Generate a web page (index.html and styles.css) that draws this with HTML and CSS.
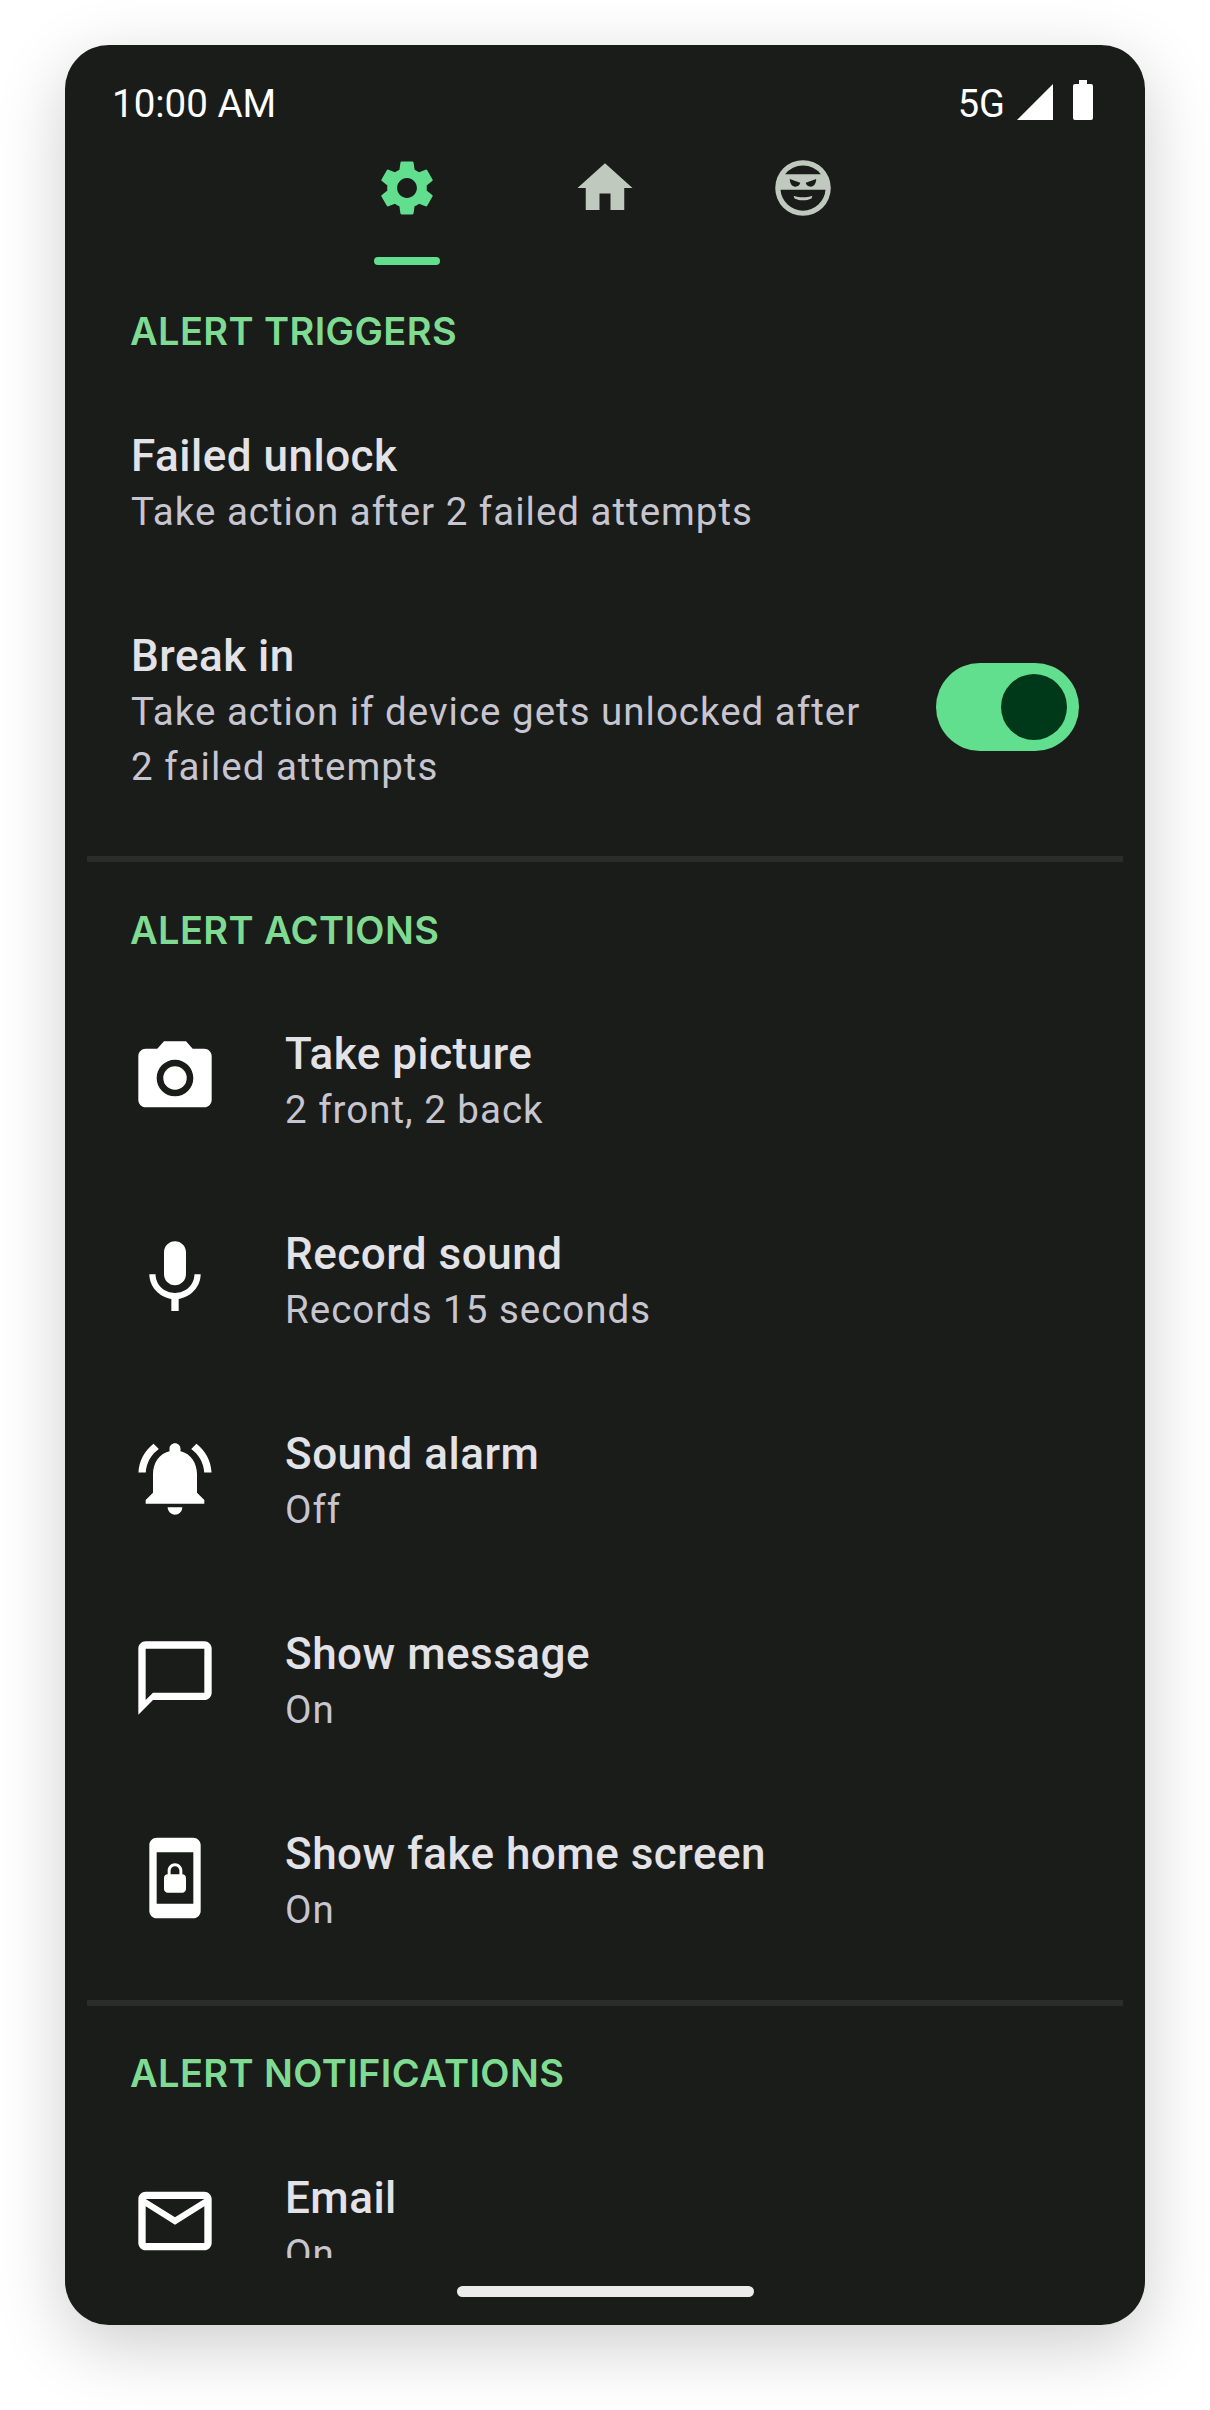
FILE: index.html
```html
<!DOCTYPE html>
<html lang="en">
<head>
  <meta charset="UTF-8">
  <title>Alert settings</title>
  <meta name="viewport" content="width=device-width, initial-scale=1.0">
  <link rel="stylesheet" href="styles.css">
</head>
<body>

  <div class="phone">
    <div class="status-bar">
      <span class="clock">10:00 AM</span>
      <div class="status-right">
        <span class="network">5G</span>
        <svg class="signal" viewBox="0 0 36 36"><path d="M36 0v36H0z"/></svg>
        <svg class="battery" viewBox="0 0 20 40"><path d="M6 0h8v4h4a2 2 0 0 1 2 2v32a2 2 0 0 1-2 2H2a2 2 0 0 1-2-2V6a2 2 0 0 1 2-2h4z"/></svg>
      </div>
    </div>

    <div class="tabs">
      <div class="tab active">
        <svg class="tab-icon" viewBox="0 0 24 24"><path d="M19.14 12.94c.04-.3.06-.61.06-.94 0-.32-.02-.64-.07-.94l2.03-1.58c.18-.14.23-.41.12-.61l-1.92-3.32c-.12-.22-.37-.29-.59-.22l-2.39.96c-.5-.38-1.03-.7-1.62-.94l-.36-2.54c-.04-.24-.24-.41-.48-.41h-3.84c-.24 0-.43.17-.47.41l-.36 2.54c-.59.24-1.13.57-1.62.94l-2.39-.96c-.22-.08-.47 0-.59.22L2.74 8.87c-.12.21-.08.47.12.61l2.03 1.58c-.05.3-.09.63-.09.94s.02.64.07.94l-2.03 1.58c-.18.14-.23.41-.12.61l1.92 3.32c.12.22.37.29.59.22l2.39-.96c.5.38 1.03.7 1.62.94l.36 2.54c.05.24.24.41.48.41h3.84c.24 0 .44-.17.47-.41l.36-2.54c.59-.24 1.13-.56 1.62-.94l2.39.96c.22.08.47 0 .59-.22l1.92-3.32c.12-.22.07-.47-.12-.61l-2.01-1.58zM12 15.6c-1.98 0-3.6-1.62-3.6-3.6s1.62-3.6 3.6-3.6 3.6 1.62 3.6 3.6-1.62 3.6-3.6 3.6z"/></svg>
      </div>
      <div class="tab">
        <svg class="tab-icon" viewBox="0 0 24 24"><path d="M10 20v-6h4v6h5v-8h3L12 3 2 12h3v8z"/></svg>
      </div>
      <div class="tab">
        <svg class="tab-icon" viewBox="0 0 24 24">
          <path fill-rule="evenodd" d="M12 1.900a10.100 10.100 0 1 1 0 20.200 10.100 10.100 0 0 1 0-20.200zM5.500 7A8.200 8.200 0 0 1 18.500 7zM3.820 12.600A8.200 8.200 0 0 0 20.180 12.600zM7.200 8.700 11 10.100c-.1.8-.8 1.400-1.800 1.400-1.200 0-2-1.200-2-2.800zM16.800 8.700 13 10.100c.1.8.8 1.400 1.800 1.400 1.200 0 2-1.200 2-2.800z"/>
          <path d="M8.600 14.800c2.200.8 4.600.8 6.800 0l-.3 1c-2 .9-4.200.9-6.200 0z"/>
        </svg>
      </div>
    </div>

    <div class="content">
      <div class="section-label first">ALERT TRIGGERS</div>

      <div class="row">
        <div class="row-text">
          <div class="row-title">Failed unlock</div>
          <div class="row-sub">Take action after 2 failed attempts</div>
        </div>
      </div>

      <div class="row">
        <div class="row-text">
          <div class="row-title">Break in</div>
          <div class="row-sub">Take action if device gets unlocked after<br>2 failed attempts</div>
        </div>
        <div class="toggle"><div class="knob"></div></div>
      </div>

      <div class="divider"></div>

      <div class="section-label">ALERT ACTIONS</div>

      <div class="row">
        <svg class="row-icon" viewBox="0 0 24 24"><path fill-rule="evenodd" d="M9 2 7.170 4H4c-1.100 0-2 .9-2 2v12c0 1.100.9 2 2 2h16c1.100 0 2-.9 2-2V6c0-1.100-.9-2-2-2h-3.170L15 2H9zm3 15c-2.760 0-5-2.240-5-5s2.240-5 5-5 5 2.240 5 5-2.240 5-5 5z"/><circle cx="12" cy="12" r="3.200"/></svg>
        <div class="row-text">
          <div class="row-title">Take picture</div>
          <div class="row-sub">2 front, 2 back</div>
        </div>
      </div>

      <div class="row">
        <svg class="row-icon" viewBox="0 0 24 24"><path d="M12 14c1.660 0 2.990-1.340 2.990-3L15 5c0-1.660-1.340-3-3-3S9 3.340 9 5v6c0 1.660 1.340 3 3 3zm5.300-3c0 3-2.540 5.100-5.300 5.100S6.700 14 6.700 11H5c0 3.410 2.720 6.230 6 6.720V21h2v-3.280c3.280-.48 6-3.300 6-6.720h-1.700z"/></svg>
        <div class="row-text">
          <div class="row-title">Record sound</div>
          <div class="row-sub">Records 15 seconds</div>
        </div>
      </div>

      <div class="row">
        <svg class="row-icon" viewBox="0 0 24 24"><path d="M7.580 4.080 6.150 2.650C3.750 4.480 2.170 7.300 2.030 10.500h2c.15-2.650 1.510-4.970 3.550-6.420zm12.390 6.420h2c-.15-3.200-1.730-6.020-4.120-7.850l-1.420 1.430c2.020 1.450 3.390 3.770 3.540 6.420zM18 11c0-3.070-1.640-5.640-4.500-6.320V4c0-.83-.67-1.500-1.500-1.500s-1.500.67-1.500 1.500v.68C7.630 5.360 6 7.920 6 11v5l-2 2v1h16v-1l-2-2v-5zm-6 11c.14 0 .27-.01.4-.04.65-.14 1.180-.58 1.440-1.180.1-.24.15-.5.15-.78h-4c.01 1.100.9 2 2.010 2z"/></svg>
        <div class="row-text">
          <div class="row-title">Sound alarm</div>
          <div class="row-sub">Off</div>
        </div>
      </div>

      <div class="row">
        <svg class="row-icon" viewBox="0 0 24 24"><path d="M20 2H4c-1.100 0-2 .9-2 2v18l4-4h14c1.100 0 2-.9 2-2V4c0-1.100-.9-2-2-2zm0 14H6l-2 2V4h16v12z"/></svg>
        <div class="row-text">
          <div class="row-title">Show message</div>
          <div class="row-sub">On</div>
        </div>
      </div>

      <div class="row">
        <svg class="row-icon" viewBox="0 0 24 24"><path d="M10 16h4c.55 0 1-.45 1-1v-3c0-.55-.45-1-1-1v-1c0-1.110-.9-2-2-2-1.110 0-2 .9-2 2v1c-.55 0-1 .45-1 1v3c0 .55.45 1 1 1zm.8-6c0-.66.54-1.200 1.200-1.200.66 0 1.200.54 1.200 1.200v1h-2.400v-1zM17 1H7c-1.100 0-2 .9-2 2v18c0 1.100.9 2 2 2h10c1.100 0 2-.9 2-2V3c0-1.100-.9-2-2-2zm0 18H7V5h10v14z"/></svg>
        <div class="row-text">
          <div class="row-title">Show fake home screen</div>
          <div class="row-sub">On</div>
        </div>
      </div>

      <div class="divider"></div>

      <div class="section-label">ALERT NOTIFICATIONS</div>

      <div class="row">
        <svg class="row-icon" viewBox="0 0 24 24"><path d="M20 4H4c-1.100 0-1.990.9-1.990 2L2 18c0 1.100.9 2 2 2h16c1.100 0 2-.9 2-2V6c0-1.100-.9-2-2-2zm0 14H4V8l8 5 8-5v10zm-8-7L4 6h16l-8 5z"/></svg>
        <div class="row-text">
          <div class="row-title">Email</div>
          <div class="row-sub">On</div>
        </div>
      </div>
    </div>

    <div class="home-area"><div class="home-bar"></div></div>
  </div>

</body>
</html>
```

FILE: styles.css
```css
body {
  margin: 0;
  padding: 45px 65px 85px;
  background: #fff;
  font-family: Roboto, sans-serif;
}
.phone {
  width: 1080px;
  height: 2280px;
  display: flex;
  flex-direction: column;
  background: #1a1c19;
  border-radius: 44px;
  box-shadow: 0 20px 70px rgba(0, 0, 0, 0.2);
  overflow: hidden;
}

/* status bar */
.status-bar {
  height: 66px;
  padding: 0 52px 0 47px;
  margin-top: 26px;
  display: flex;
  justify-content: space-between;
  align-items: flex-start;
  color: #fff;
}
.clock {
  font-size: 38.5px;
  line-height: 66px;
}
.status-right {
  display: flex;
  align-items: flex-end;
  gap: 12px;
  height: 40px;
  margin-top: 9px;
}
.network {
  font-size: 38px;
  line-height: 32px;
}
.signal {
  width: 36px;
  height: 36px;
  fill: #fff;
}
.battery {
  width: 20px;
  height: 40px;
  fill: #fff;
  margin-left: 8px;
}

/* tabs */
.tabs {
  display: flex;
  justify-content: center;
  gap: 132px;
  padding-top: 18px;
}
.tab {
  width: 66px;
  height: 110px;
  position: relative;
}
.tab-icon {
  display: block;
  width: 66px;
  height: 66px;
  fill: #bfc9bd;
}
.tab.active .tab-icon {
  fill: #62de8f;
}
.tab.active::after {
  content: "";
  position: absolute;
  left: 0;
  bottom: 0;
  width: 66px;
  height: 8px;
  background: #62de8f;
  border-radius: 4px;
}

/* list */
.content {
  flex: 1;
  overflow: hidden;
  height: 0;
}
.section-label {
  font-family: Inter, sans-serif;
  font-weight: 600;
  font-size: 38px;
  line-height: 48px;
  letter-spacing: 0.4px;
  color: #7fdb92;
  padding: 43.5px 65px 0;
  margin-bottom: 28px;
}
.section-label.first {
  padding-top: 42px;
}
.row {
  display: flex;
  align-items: center;
  padding: 44.5px 66px;
}
.row-text {
  flex: 1;
}
.row-title {
  font-size: 44px;
  font-weight: 500;
  line-height: 56px;
  letter-spacing: 0.5px;
  color: #e3e2e6;
}
.row-sub {
  font-size: 38.5px;
  line-height: 55px;
  letter-spacing: 1px;
  color: #c7c5d0;
}
.row-icon {
  width: 88px;
  height: 88px;
  fill: #fff;
  margin-right: 66px;
  margin-bottom: 8px;
  flex-shrink: 0;
}
.divider {
  height: 6px;
  margin: 18px 22px 0;
  background: #2a2d29;
}

/* toggle */
.toggle {
  width: 143px;
  height: 88px;
  border-radius: 44px;
  background: #62de8f;
  display: flex;
  align-items: center;
  justify-content: flex-end;
  padding-right: 12px;
  box-sizing: border-box;
  margin-bottom: 7px;
}
.knob {
  width: 66px;
  height: 66px;
  border-radius: 50%;
  background: #003919;
}

.home-area {
  height: 67px;
  display: flex;
  justify-content: center;
  padding-top: 28px;
  box-sizing: border-box;
}
.home-bar {
  width: 297px;
  height: 11px;
  background: #ececec;
  border-radius: 6px;
}
```
